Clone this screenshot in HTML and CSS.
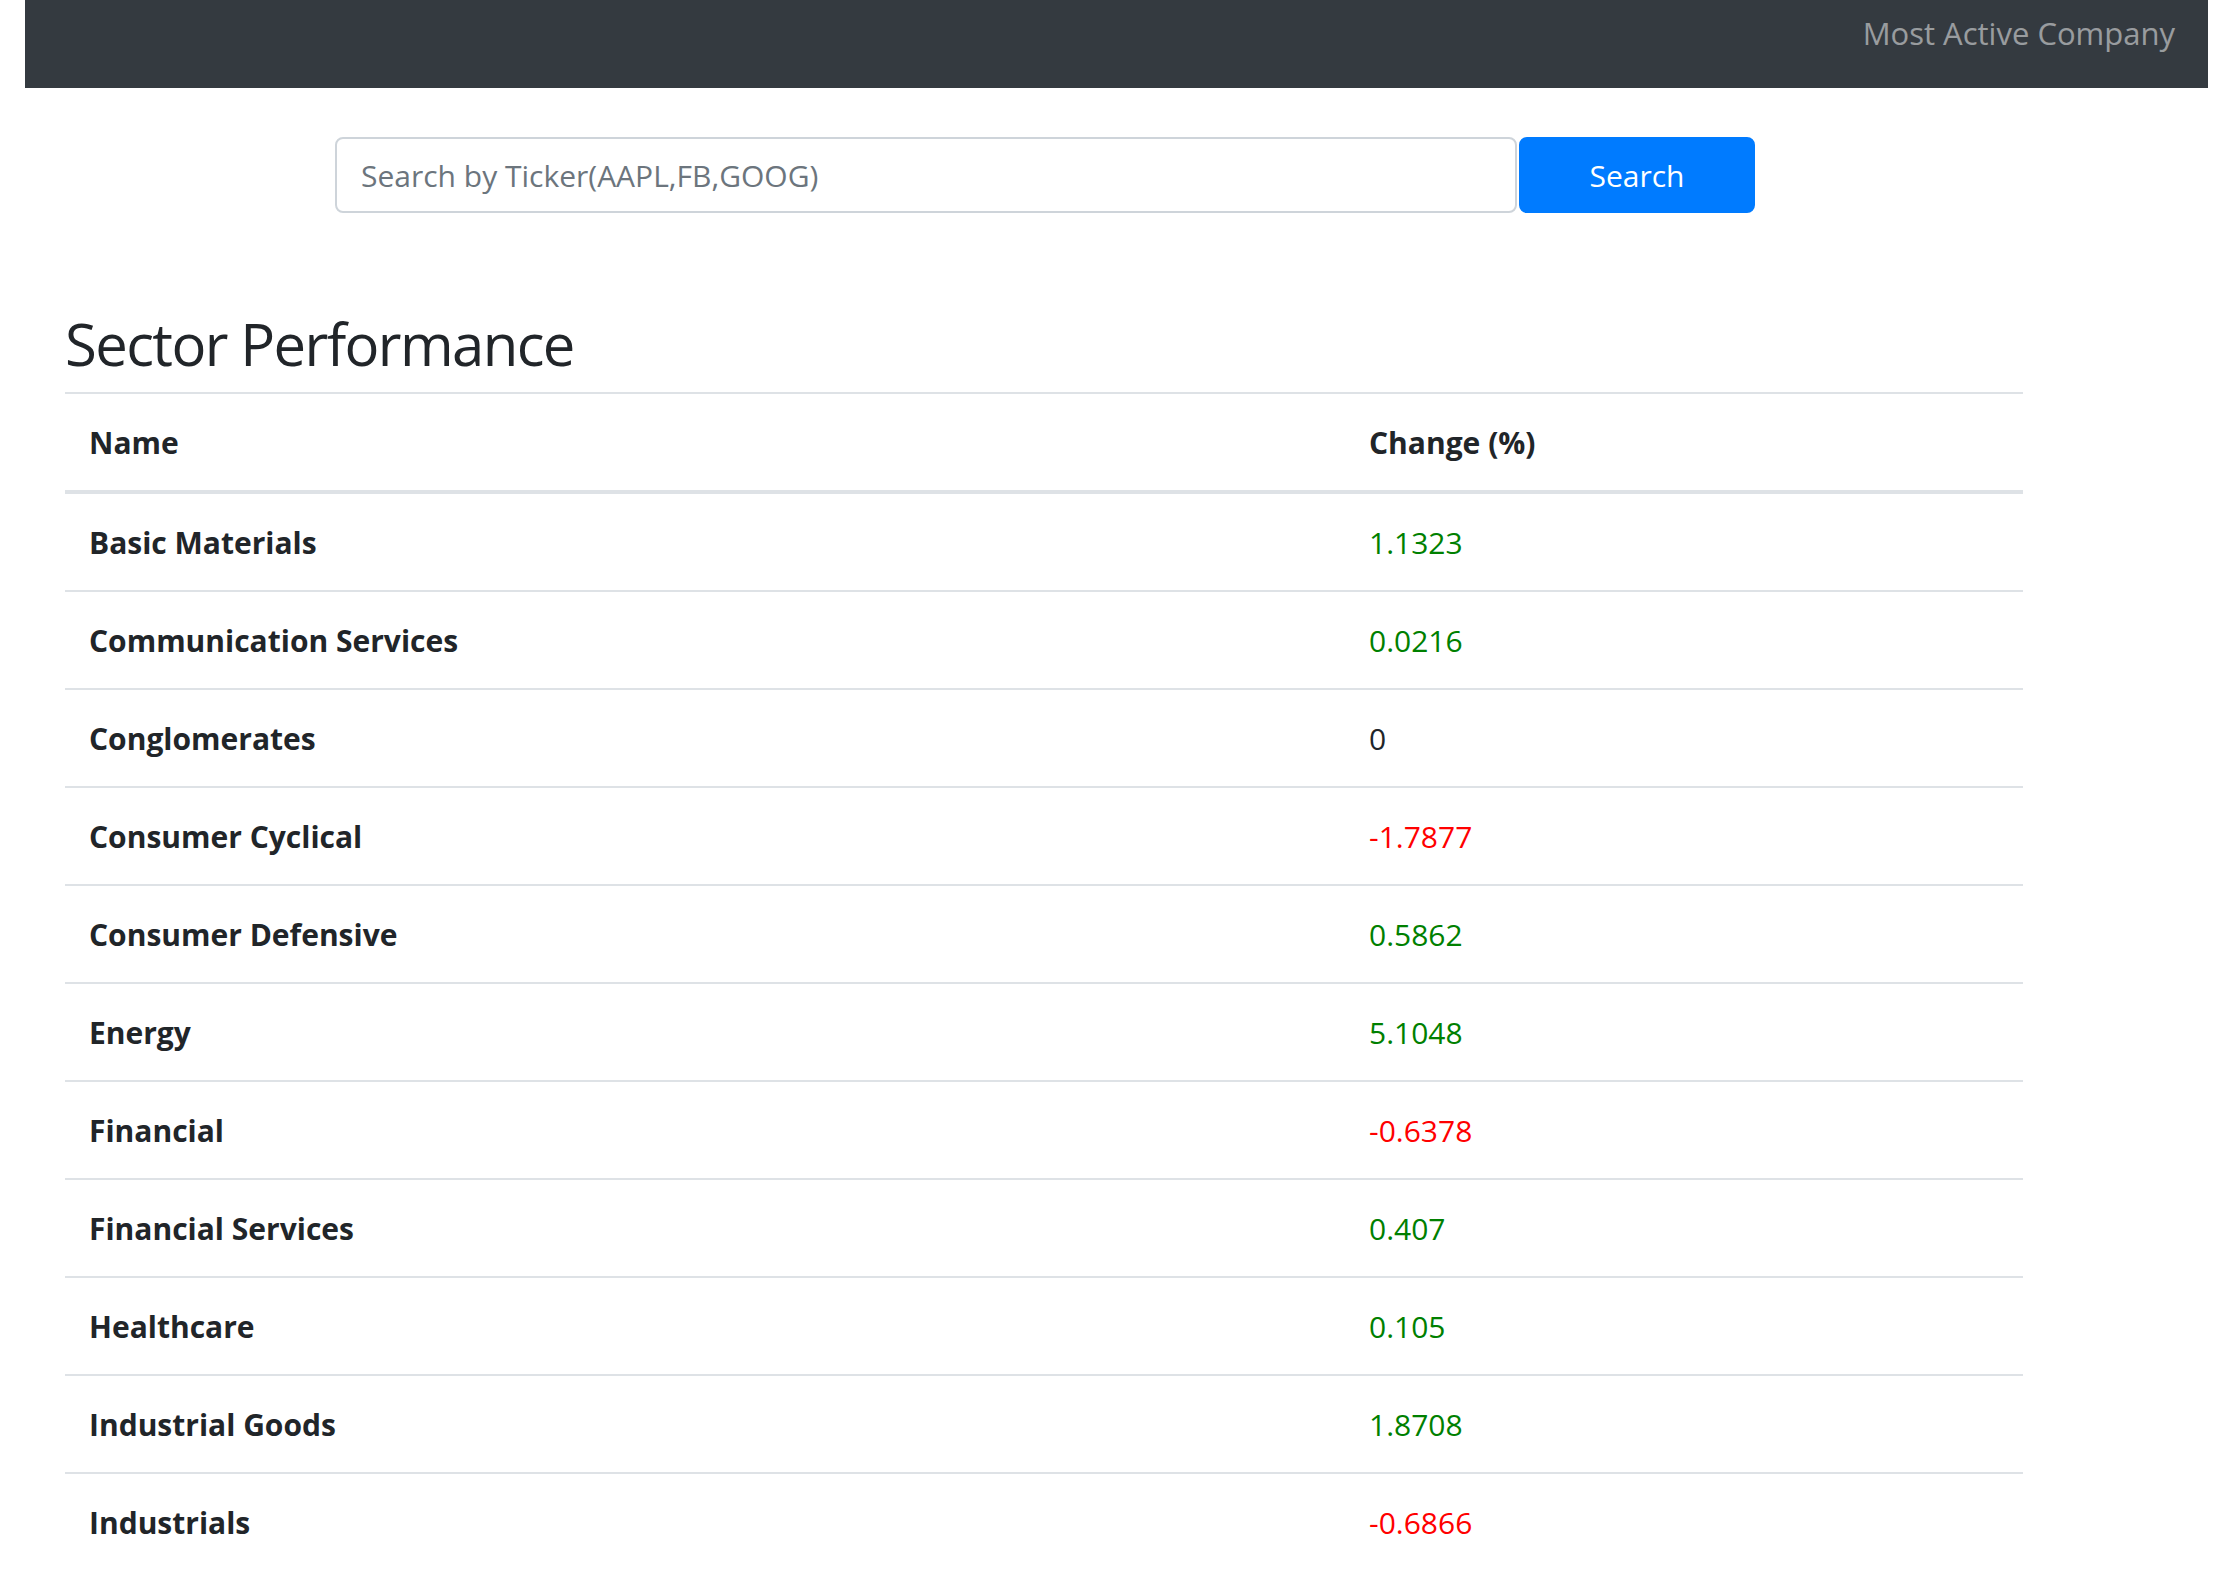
FILE: index.html
```html
<!DOCTYPE html>
<html lang="en">
<head>
<meta charset="utf-8">
<title>Sector Performance</title>
<link rel="stylesheet" href="styles.css">
</head>
<body>
<nav class="navbar">
  <a class="nav-link" href="#">Most Active Company</a>
</nav>
<form class="search" onsubmit="return false;">
  <input class="search-input" type="text" placeholder="Search by Ticker(AAPL,FB,GOOG)">
  <button class="search-btn" type="submit">Search</button>
</form>
<main class="content">
  <h2 class="title">Sector Performance</h2>
  <table class="table">
    <thead>
      <tr><th class="col-name">Name</th><th class="col-change">Change (%)</th></tr>
    </thead>
    <tbody>
      <tr><th>Basic Materials</th><td class="up">1.1323</td></tr>
      <tr><th>Communication Services</th><td class="up">0.0216</td></tr>
      <tr><th>Conglomerates</th><td>0</td></tr>
      <tr><th>Consumer Cyclical</th><td class="down">-1.7877</td></tr>
      <tr><th>Consumer Defensive</th><td class="up">0.5862</td></tr>
      <tr><th>Energy</th><td class="up">5.1048</td></tr>
      <tr><th>Financial</th><td class="down">-0.6378</td></tr>
      <tr><th>Financial Services</th><td class="up">0.407</td></tr>
      <tr><th>Healthcare</th><td class="up">0.105</td></tr>
      <tr><th>Industrial Goods</th><td class="up">1.8708</td></tr>
      <tr><th>Industrials</th><td class="down">-0.6866</td></tr>
    </tbody>
  </table>
</main>
</body>
</html>
```

FILE: styles.css
```css
html, body {
  margin: 0;
  padding: 0;
  background: #fff;
}
body {
  font-family: "Open Sans", "Noto Sans", "Liberation Sans", sans-serif;
  color: #212529;
  font-size: 30px;
  line-height: 48px;
  overflow: hidden;
}
.navbar {
  margin: 0 24px 0 25px;
  height: 88px;
  background: #343a40;
  display: flex;
  justify-content: flex-end;
  align-items: flex-start;
  padding: 9px 33px 0 0;
  box-sizing: border-box;
}
.nav-link {
  color: rgba(255, 255, 255, 0.5);
  text-decoration: none;
  font-size: 31px;
  line-height: 48px;
}
.search {
  display: flex;
  margin: 49px 0 0 335px;
  gap: 2px;
}
.search-input {
  width: 1182px;
  height: 76px;
  box-sizing: border-box;
  border: 2px solid #ced4da;
  border-radius: 8px;
  padding: 0 24px;
  font-family: inherit;
  font-size: 30px;
  color: #495057;
  outline: none;
}
.search-input::placeholder {
  color: #6c757d;
}
.search-btn {
  width: 236px;
  height: 76px;
  border: 2px solid #007bff;
  background: #007bff;
  color: #fff;
  border-radius: 8px;
  font-family: inherit;
  font-size: 30px;
  padding: 0;
}
.content {
  margin: 78px 0 0 65px;
  width: 1958px;
}
.title {
  margin: 0 0 10px;
  padding-top: 14px;
  font-size: 58px;
  letter-spacing: -1.6px;
  line-height: 77px;
  font-weight: 500;
}
.table {
  width: 100%;
  border-collapse: collapse;
}
.table th, .table td {
  padding: 25px 24px 23px;
  border-top: 2px solid #dee2e6;
  text-align: left;
  vertical-align: top;
}
.table th {
  font-weight: 700;
}
.table td {
  font-weight: 400;
}
.table thead th {
  border-bottom: 4px solid #dee2e6;
}
.col-name {
  width: 1232px;
}
.up { color: green; }
.down { color: red; }
```
